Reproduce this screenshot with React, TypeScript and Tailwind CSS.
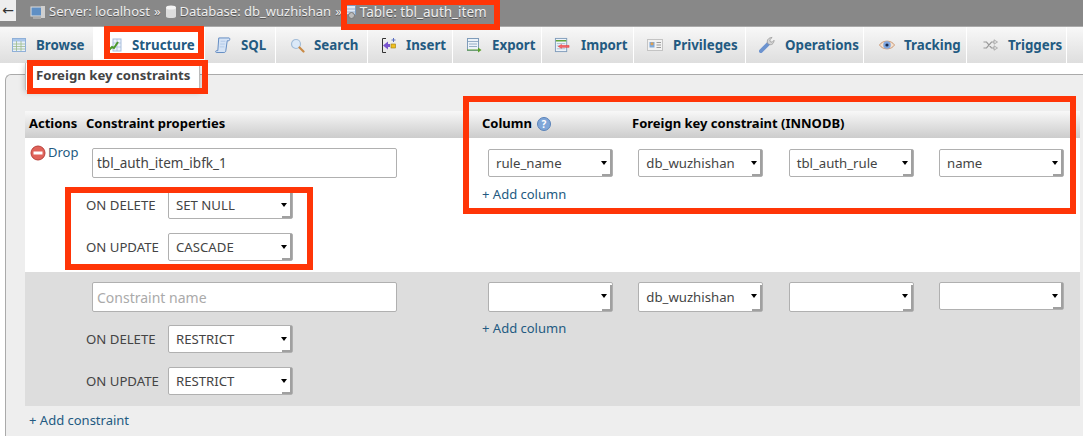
import type { ReactNode } from "react";

const font = "font-['Noto_Sans','Liberation_Sans',sans-serif]";

const BrowseIcon = () => (
  <svg width="16" height="16" viewBox="0 0 16 16">
    <rect x="1.500" y="1.500" width="13" height="13" fill="#e8f0fa" stroke="#8fb0d8" />
    <rect x="2" y="2" width="12" height="2.500" fill="#a9c6ea" />
    <path d="M2 7h12M2 9.500h12M2 12h12M5.500 4v10M10 4v10" stroke="#9dbb8c" strokeWidth=".8" fill="none" />
  </svg>
);

const StructureIcon = () => (
  <svg width="14" height="16" viewBox="0 0 14 16">
    <rect x="5" y="2" width="8" height="12" fill="#eef3fb" stroke="#a8bedd" />
    <path d="M9 2v12M5 6h8M5 10h8" stroke="#a8bedd" strokeWidth=".8" />
    <path d="M1 13l3-3 2 1 4-6" stroke="#4d9a2c" strokeWidth="2" fill="none" />
  </svg>
);

const SqlIcon = () => (
  <svg width="17" height="18" viewBox="0 0 17 18">
    <path d="M4 1.500h11c1 0 1 3-.5 3H13L11.500 15c-.2 1.500-1 2-2 2H1.500c-1 0-1-2 0-2h1.500z" fill="#d5e3f5" stroke="#5d88c0" />
    <path d="M6 5h5M5.500 8h5M5 11h5" stroke="#a9c3e4" strokeWidth=".8" />
  </svg>
);

const SearchIcon = () => (
  <svg width="15" height="15" viewBox="0 0 15 15">
    <circle cx="6" cy="6" r="4.500" fill="#dbe9f8" stroke="#a3bdd8" strokeWidth="1.200" />
    <path d="M9.500 9.500l4 4" stroke="#c98a45" strokeWidth="2.200" strokeLinecap="round" />
  </svg>
);

const InsertIcon = () => (
  <svg width="16" height="17" viewBox="0 0 16 17">
    <path d="M5 1.500H1.500v14H5" stroke="#333" fill="none" />
    <path d="M2 8.500l5-4v2.500h2v3H7v2.500z" fill="#7a55cf" />
    <rect x="10" y="7" width="4.500" height="4" fill="#f0c020" stroke="#9a7a10" strokeWidth=".6" />
    <path d="M12.500 1v4M10.500 3h4" stroke="#5a6ec0" />
  </svg>
);

const ExportIcon = () => (
  <svg width="16" height="16" viewBox="0 0 16 16">
    <rect x="1.500" y="1.500" width="11" height="12" fill="#edf3f9" stroke="#7f9cba" />
    <path d="M2 4.500h10M3 7h8M3 9.500h8" stroke="#7f9cba" strokeWidth=".8" />
    <path d="M1 12.500h11v-2l3.500 2.500-3.500 2.500v-2H1z" fill="#5aa02c" />
  </svg>
);

const ImportIcon = () => (
  <svg width="17" height="16" viewBox="0 0 17 16">
    <rect x="1.500" y="1" width="12" height="14" fill="#edf3f9" stroke="#7f9cba" />
    <path d="M2 3.500h11" stroke="#5aa02c" strokeWidth="1.500" />
    <path d="M3 6.500h9M3 9h3M3 12h9" stroke="#9bb2c8" strokeWidth=".8" />
    <path d="M4.500 9.500L8 7.500v1h8v2H8v1z" fill="#f3686a" stroke="#e02424" strokeWidth=".5" />
  </svg>
);

const PrivilegesIcon = () => (
  <svg width="16" height="12" viewBox="0 0 16 12">
    <rect x=".5" y=".5" width="15" height="11" fill="#f2f2f2" stroke="#c4c4c4" />
    <rect x="2.500" y="3" width="5" height="5.500" fill="#7fa8d8" />
    <circle cx="5" cy="4.800" r="1.500" fill="#e0a050" />
    <path d="M9.500 3.500h4.500M9.500 6h4.500M9.500 8.500h4.500" stroke="#9a9a9a" />
  </svg>
);

const OperationsIcon = () => (
  <svg width="17" height="18" viewBox="0 0 17 18">
    <path d="M2 15.500l8-8" stroke="#6c93cf" strokeWidth="4" strokeLinecap="round" />
    <path d="M9 7c-1-3 1-6 5-6l-2.500 2.500.5 2 2 .5L16 4c0 3.500-3 6-6 4z" fill="#d5d5d5" stroke="#8c8c8c" strokeWidth=".7" />
  </svg>
);

const TrackingIcon = () => (
  <svg width="17" height="12" viewBox="0 0 17 12">
    <path d="M.5 6C4 .5 13 .5 16.500 6 13 11.500 4 11.500 .5 6z" fill="#f5e2d0" stroke="#c99470" />
    <circle cx="8.500" cy="6" r="4" fill="#7ea6e0" />
    <circle cx="8.500" cy="6" r="1.700" fill="#1b2a4a" />
  </svg>
);

const TriggersIcon = () => (
  <svg width="15" height="12" viewBox="0 0 15 12">
    <path d="M.5 3h3l5 6h3M.5 9h3l5-6h3" stroke="#999" strokeWidth="1.200" fill="none" />
    <path d="M11 .8L14.500 3 11 5.200zM11 6.800L14.500 9 11 11.200z" fill="#e4e4e4" stroke="#999" strokeWidth=".7" />
  </svg>
);

const tabs = [
  { label: "Browse", icon: <BrowseIcon />, box: "w-[94px] pl-[11px]", text: "ml-[9px]" },
  { label: "Structure", icon: <StructureIcon />, box: "w-[111px] pl-[13px] bg-white", text: "ml-[9px]" },
  { label: "SQL", icon: <SqlIcon />, box: "w-[71px] pl-[10px]", text: "ml-[10px]" },
  { label: "Search", icon: <SearchIcon />, box: "w-[92px] pl-[13px]", text: "ml-[9px]" },
  { label: "Insert", icon: <InsertIcon />, box: "w-[85px] pl-[13px]", text: "ml-[9px]" },
  { label: "Export", icon: <ExportIcon />, box: "w-[89px] pl-[13px]", text: "ml-[10px]" },
  { label: "Import", icon: <ImportIcon />, box: "w-[92px] pl-[12px]", text: "ml-[11px]" },
  { label: "Privileges", icon: <PrivilegesIcon />, box: "w-[112px] pl-[13px]", text: "ml-[10px]" },
  { label: "Operations", icon: <OperationsIcon />, box: "w-[118px] pl-[13px]", text: "ml-[10px]" },
  { label: "Tracking", icon: <TrackingIcon />, box: "w-[103px] pl-[15px]", text: "ml-[9px]" },
  { label: "Triggers", icon: <TriggersIcon />, box: "w-[100px] pl-[15px]", text: "ml-[10px]" },
];

const Crumb = ({ icon, children }: { icon: ReactNode; children: ReactNode }) => (
  <span className="flex items-center gap-[3px]">
    {icon}
    {children}
  </span>
);

// old-school chrome select: flat box with a dark notch in the bottom right corner
const Select = ({ value, className }: { value?: string; className: string }) => (
  <div className={`relative flex items-center w-[125px] shrink-0 bg-white border border-[#b0b0b0] rounded-[2px] pl-[7px] pt-[2px] text-[13.2px] text-[#444] ${className}`}>
    {value}
    <span className="absolute right-0 bottom-0 w-[2px] h-[26px] bg-[#a0a0a0]" />
    <span className="absolute right-0 bottom-0 w-[10px] h-[2px] bg-[#a0a0a0]" />
    <span className="absolute right-[5px] top-[11px] w-0 h-0 border-x-[3.500px] border-x-transparent border-t-[4px] border-t-black" />
  </div>
);

const Action = ({ label, value }: { label: string; value: string }) => (
  <div className="flex items-center text-[13.2px] text-[#444]">
    <span className="pt-[2px]">{label}</span>
    <Select value={value} className="h-[28px] ml-auto" />
  </div>
);

const AddLink = ({ children, className }: { children: ReactNode; className?: string }) => (
  <div className={`text-[13px] text-[#235a81] ${className ?? ""}`}>+ {children}</div>
);

const Annotation = ({ className }: { className: string }) => (
  <div className={`absolute border-[6px] border-[#ff3507] pointer-events-none ${className}`} />
);

const Row = ({
  bg,
  drop,
  name,
  del,
  upd,
  cols,
}: {
  bg: string;
  drop?: boolean;
  name?: string;
  del: string;
  upd: string;
  cols: ReactNode;
}) => (
  <div className={`flex h-[134px] ${bg}`}>
    <div className="w-[61px] pl-[5px] pt-[6px] shrink-0">
      {drop && (
        <div className="flex items-start gap-[2px] text-[13px] leading-[16px] text-[#235a81]">
          <svg width="16" height="16" viewBox="0 0 16 16" className="mt-[1px]">
            <circle cx="8" cy="8" r="7" fill="#e0635a" stroke="#b9403a" />
            <rect x="3.500" y="6.500" width="9" height="3" fill="#fff" />
          </svg>
          Drop
        </div>
      )}
    </div>
    <div className="w-[324px] shrink-0 pt-[10px]">
      <div className="ml-[6px] w-[305px] h-[30px] bg-white border border-[#b0b0b0] rounded-[2px] flex items-center pl-[4px]">
        {name ? <span className="text-[13.500px] text-[#444]">{name}</span> : <span className="text-[14px] text-[#aaa]">Constraint name</span>}
      </div>
      <div className="mt-[13px] w-[207px] flex flex-col gap-[14px]">
        <Action label="ON DELETE" value={del} />
        <Action label="ON UPDATE" value={upd} />
      </div>
    </div>
    <div className="flex-1 ml-[60px] pt-[10px]">{cols}</div>
  </div>
);

export default function App() {
  return (
    <div className={`relative w-[1083px] h-[436px] overflow-hidden bg-white ${font}`}>
      <header className="flex h-[26px] bg-[#888] text-[13px] text-[#eee] [text-shadow:0_1px_0_#555]">
        <div className="w-[16px] h-[21px] bg-[#eee] flex items-center justify-center text-[#333] text-[14px] font-['DejaVu_Sans'] [text-shadow:none]">←</div>
        <div className="flex items-center h-[24px] ml-[14px] gap-[4px]">
          <Crumb
            icon={
              <svg width="16" height="15" viewBox="0 0 16 15">
                <rect x="1" y="2" width="11" height="9" fill="#5f8fc4" stroke="#ddd" />
                <rect x="11" y="1" width="4" height="12" fill="#cfcfcf" />
                <path d="M3 13h8" stroke="#ccc" />
              </svg>
            }
          >
            Server: localhost
          </Crumb>
          <span>»</span>
          <Crumb
            icon={
              <svg width="12" height="14" viewBox="0 0 12 14">
                <path d="M1 2.500v9c0 2 10 2 10 0v-9z" fill="#ddd" />
                <ellipse cx="6" cy="2.500" rx="5" ry="2" fill="#f4f4f4" />
              </svg>
            }
          >
            Database: db_wuzhishan
          </Crumb>
          <span>»</span>
          <Crumb
            icon={
              <svg width="10" height="14" viewBox="0 0 10 14">
                <rect x=".5" y=".5" width="9" height="9" fill="#dfe9f5" stroke="#7c9cc0" />
                <path d="M1 4h8M1 7h8" stroke="#7c9cc0" strokeWidth=".7" />
                <circle cx="5.500" cy="10.500" r="3" fill="#bbb" stroke="#777" />
              </svg>
            }
          >
            <span className="ml-[1px] text-[13.500px]">Table: tbl_auth_item</span>
          </Crumb>
        </div>
      </header>

      <nav className="flex h-[37px] border-t border-[#aaa] bg-gradient-to-b from-[#f8f8f8] to-[#dedede]">
        {tabs.map((t) => (
          <div key={t.label} className={`flex items-center shrink-0 border-r border-[#fff] ${t.box}`}>
            <span className="flex w-[16px] justify-center shrink-0">{t.icon}</span>
            <span className={`pt-[2px] text-[13.300px] font-bold text-[#235a81] ${t.text}`}>{t.label}</span>
          </div>
        ))}
      </nav>

      {/* submenu hanging under the Structure tab */}
      <div className="absolute left-[25px] top-[63px] w-[175px] h-[27px] bg-white border-x border-[#bbb] shadow-[0_2px_6px_rgba(0,0,0,.25)] z-10 pl-[10px] text-[13.200px] font-bold text-[#444] leading-[24px]">
        Foreign key constraints
      </div>

      <main className="mt-[11px] ml-[5px] h-[362px] bg-[#eee] border-t border-l border-[#aaa] rounded-tl-[6px] pl-[19px] pt-[36px]">
        <div className="w-[1055px]">
          <div className="flex h-[27px] items-center pb-[2px] bg-gradient-to-b from-[#f8f8f8] to-[#ccc] text-[13px] font-bold text-black">
            <span className="ml-[4px] w-[57px]">Actions</span>
            <span className="w-[396px]">Constraint properties</span>
            <span className="flex items-center w-[150px] gap-[5px]">
              Column
              <svg width="14" height="14" viewBox="0 0 14 14">
                <circle cx="7" cy="7" r="6.500" fill="#7fa6d8" stroke="#5a82b8" />
                <text x="7" y="10.500" textAnchor="middle" fontSize="10" fontWeight="700" fill="#fff">?</text>
              </svg>
            </span>
            <span>Foreign key constraint (INNODB)</span>
          </div>

          <Row
            bg="bg-white"
            drop
            name="tbl_auth_item_ibfk_1"
            del="SET NULL"
            upd="CASCADE"
            cols={
              <>
                <div className="flex gap-[25.330px] ml-[18px] mt-[1px]">
                  <Select value="rule_name" className="h-[28px]" />
                  <Select value="db_wuzhishan" className="h-[28px]" />
                  <Select value="tbl_auth_rule" className="h-[28px]" />
                  <Select value="name" className="h-[28px]" />
                </div>
                <AddLink className="ml-[12px] mt-[8px]">Add column</AddLink>
              </>
            }
          />
          <Row
            bg="bg-[#ddd]"
            del="RESTRICT"
            upd="RESTRICT"
            cols={
              <>
                <div className="flex items-start gap-[25.330px] ml-[18px]">
                  <Select className="h-[30px]" />
                  <Select value="db_wuzhishan" className="h-[30px]" />
                  <Select className="h-[30px]" />
                  <Select className="h-[28px]" />
                </div>
                <AddLink className="ml-[12px] mt-[7px]">Add column</AddLink>
              </>
            }
          />
          <AddLink className="ml-[4px] mt-[5px]">Add constraint</AddLink>
        </div>
      </main>

      <Annotation className="left-[341px] top-[-1px] w-[159px] h-[31px] z-20" />
      <Annotation className="left-[104px] top-[26px] w-[100px] h-[33px] z-20" />
      <Annotation className="left-[27px] top-[60px] w-[181px] h-[34px] z-20" />
      <Annotation className="left-[463px] top-[96px] w-[613px] h-[118px] z-20" />
      <Annotation className="left-[65px] top-[187px] w-[248px] h-[83px] z-20" />
    </div>
  );
}
